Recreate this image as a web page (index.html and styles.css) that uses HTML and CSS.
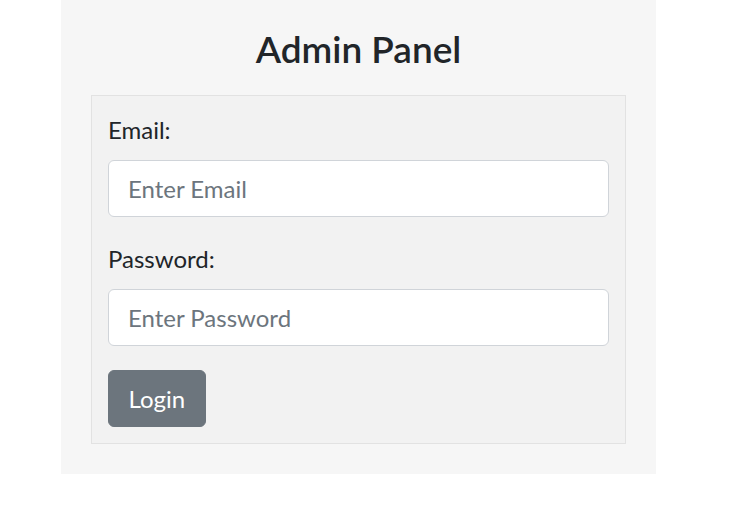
FILE: index.html
```html
<!DOCTYPE html>
<html lang="en">
<head>
    <meta charset="UTF-8">
    <meta name="viewport" content="width=device-width, initial-scale=1.0">
    <title>Admin Panel</title>
    <link rel="stylesheet" href="styles.css">
</head>
<body>
    <div class="container">
        <h1>Admin Panel</h1>
        <form class="login-box">
            <div class="form-group">
                <label for="email">Email:</label>
                <input type="email" id="email" class="form-control" placeholder="Enter Email">
            </div>
            <div class="form-group">
                <label for="password">Password:</label>
                <input type="password" id="password" class="form-control" placeholder="Enter Password">
            </div>
            <button type="submit" class="btn">Login</button>
        </form>
    </div>
</body>
</html>
```

FILE: styles.css
```css
body {
    font-family: Lato, "Open Sans", sans-serif;
    margin: 0;
    background-color: #fff;
    color: #212529;
}
.container {
    width: 595px;
    margin-left: 61px;
    padding: 26px 30px 30px;
    box-sizing: border-box;
    background-color: #f6f6f6;
}
h1 {
    margin: 0 0 23px;
    font-size: 37px;
    line-height: 46px;
    font-weight: 600;
    text-align: center;
}
.login-box {
    margin: 0;
    padding: 16px;
    background-color: #f2f2f2;
    border: 1px solid #e2e2e2;
}
.form-group {
    margin-bottom: 24px;
}
label {
    display: block;
    font-size: 24px;
    line-height: 36px;
    margin-bottom: 12px;
}
.form-control {
    display: block;
    width: 100%;
    height: 57px;
    box-sizing: border-box;
    padding: 0 19px;
    font-family: inherit;
    font-size: 24px;
    color: #495057;
    background-color: #fff;
    border: 1px solid #d0d4d9;
    border-radius: 6px;
}
.form-control::placeholder {
    color: #6c757d;
}
.btn {
    display: block;
    height: 57px;
    padding: 0 19.5px;
    font-family: inherit;
    font-size: 24px;
    color: #fff;
    background-color: #6c757d;
    border: 1px solid #6c757d;
    border-radius: 6px;
}
```
